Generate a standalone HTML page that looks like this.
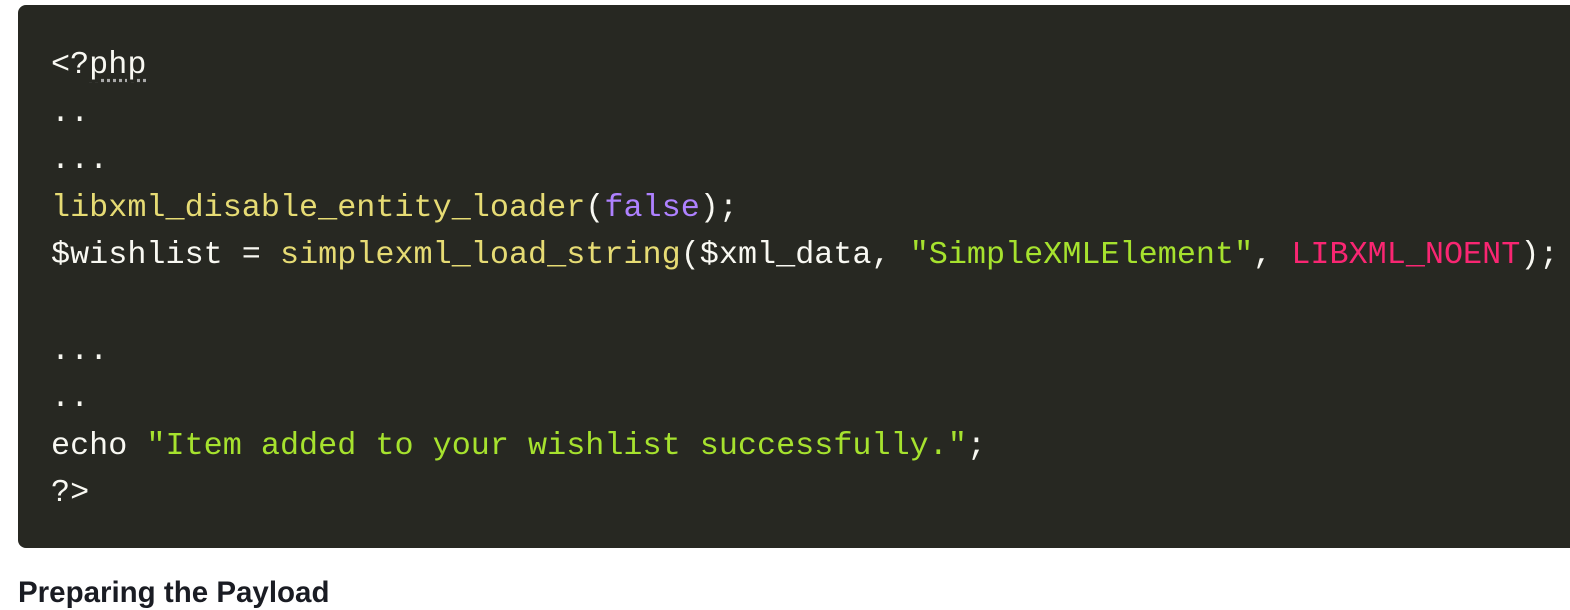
<!DOCTYPE html>
<html><head><meta charset="utf-8"><style>
html,body{margin:0;padding:0;background:#fff;width:1570px;height:592px;overflow:hidden}
.box{position:absolute;left:18px;top:5px;width:1600px;height:543px;background:#272822;border-radius:8px}
pre{position:absolute;left:51px;top:42px;margin:0;font-family:"Liberation Mono",monospace;font-size:31.8px;line-height:47.6px;color:#f8f8f2;white-space:pre}
.f{color:#e6db74}.b{color:#ae81ff}.s{color:#a6e22e}.c{color:#f92672}
abbr{text-decoration:underline dotted;text-decoration-color:#aaa;text-underline-offset:6px}
h3{position:absolute;left:18px;top:576px;margin:0;font-family:"Liberation Sans",sans-serif;font-weight:bold;font-size:29.5px;color:#1a1c23}
</style></head><body>
<div class="box"></div>
<pre>&lt;?<abbr>php</abbr>
..
...
<span class="f">libxml_disable_entity_loader</span>(<span class="b">false</span>);
$wishlist = <span class="f">simplexml_load_string</span>($xml_data, <span class="s">"SimpleXMLElement"</span>, <span class="c">LIBXML_NOENT</span>);

...
..
echo <span class="s">"Item added to your wishlist successfully."</span>;
?&gt;</pre>
<h3>Preparing the Payload</h3>
</body></html>
